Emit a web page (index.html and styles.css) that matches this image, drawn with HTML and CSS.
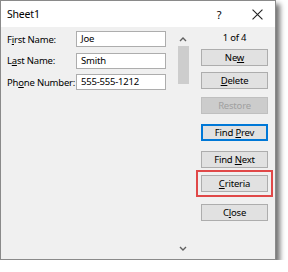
FILE: index.html
```html
<!DOCTYPE html>
<html lang="en">
<head>
  <meta charset="UTF-8" />
  <title>Sheet1</title>
  <link rel="stylesheet" href="styles.css">
</head>
<body>
  <div class="dialog">
    <div class="titlebar">
      <div class="title">Sheet1</div>
      <div class="title-btn help">?</div>
      <div class="title-btn close">
        <svg viewBox="0 0 10 10" width="11" height="11"><path d="M0.5 0.5 L9.5 9.5 M9.5 0.5 L0.5 9.5" stroke="#222" stroke-width="1" fill="none" /></svg>
      </div>
    </div>
    <div class="body">
      <div class="fields">
        <div class="field">
          <label>F<u>i</u>rst Name:</label>
          <div class="input">Joe</div>
        </div>
        <div class="field">
          <label>L<u>a</u>st Name:</label>
          <div class="input">Smith</div>
        </div>
        <div class="field">
          <label>Ph<u>o</u>ne Number:</label>
          <div class="input">555-555-1212</div>
        </div>
      </div>
      <div class="scrollbar">
        <svg class="arrow" viewBox="0 0 8 5" width="8" height="5"><path d="M1 4 L4 1 L7 4" stroke="#606060" stroke-width="1.4" fill="none" /></svg>
        <div class="thumb"></div>
        <div class="track"></div>
        <svg class="arrow" viewBox="0 0 8 5" width="8" height="5"><path d="M1 1 L4 4 L7 1" stroke="#606060" stroke-width="1.4" fill="none" /></svg>
      </div>
      <div class="buttons">
        <div class="counter">1 of 4</div>
        <div class="btn">Ne<u>w</u></div>
        <div class="btn delete"><u>D</u>elete</div>
        <div class="btn restore disabled">Restore</div>
        <div class="btn prev default">Find <u>P</u>rev</div>
        <div class="btn next">Find <u>N</u>ext</div>
        <div class="btn criteria marked"><u>C</u>riteria</div>
        <div class="btn last">C<u>l</u>ose</div>
      </div>
    </div>
  </div>
</body>
</html>
```

FILE: styles.css
```css
body {
  margin: 0;
  background: #fff;
  font-family: "Noto Sans", sans-serif;
  font-size: 9.5px;
  letter-spacing: -0.2px;
  color: #000;
}
.dialog {
  width: 274px;
  height: 258px;
  border: 1px solid #8a8a8a;
  background: #f0f0f0;
  display: flex;
  flex-direction: column;
  box-shadow: 4px 4px 5px rgba(0, 0, 0, 0.55);
}
.titlebar {
  height: 26px;
  background: #fff;
  display: flex;
  align-items: center;
  padding: 0 4px 0 6px;
}
.title {
  flex: 1;
  font-size: 10.5px;
}
.title-btn {
  width: 28px;
  text-align: center;
  font-size: 11px;
}
.help {
  margin-right: 10px;
}
.close {
  display: flex;
  justify-content: center;
}
.body {
  flex: 1;
  display: flex;
}
.fields {
  width: 164px;
  padding: 4px 0 0 6px;
  display: flex;
  flex-direction: column;
  gap: 5.5px;
}
.field {
  display: flex;
  align-items: center;
}
.field label {
  width: 69px;
  white-space: nowrap;
}
.input {
  width: 84px;
  height: 14px;
  border: 1px solid #adadad;
  background: #fff;
  padding-left: 4px;
  line-height: 14px;
}
.scrollbar {
  width: 12px;
  margin: 9px 0 0 6px;
  display: flex;
  flex-direction: column;
  align-items: center;
}
.arrow {
  flex: none;
  margin: 1px 0 4px;
}
.thumb {
  width: 11px;
  height: 38px;
  background: #cdcdcd;
}
.track {
  flex: 1;
}
.scrollbar .arrow:last-child {
  margin: 0 0 8px;
}
.buttons {
  width: 67px;
  margin-left: 12px;
  display: flex;
  flex-direction: column;
}
.counter {
  text-align: center;
  margin-top: 4px;
  height: 14px;
  line-height: 14px;
}
.btn {
  height: 15px;
  line-height: 15px;
  border: 1px solid #adadad;
  background: #e1e1e1;
  text-align: center;
  margin-top: 4px;
}
.btn.delete {
  margin-top: 6px;
}
.btn.restore {
  margin-top: 8px;
}
.btn.prev {
  margin-top: 10px;
}
.btn.next {
  margin-top: 10px;
}
.btn.criteria {
  margin-top: 7px;
}
.btn.last {
  margin-top: 12px;
}
.btn.disabled {
  color: #a0a0a0;
  background: #cccccc;
  border-color: #bfbfbf;
}
.btn.default {
  border-color: #0078d7;
  box-shadow: inset 0 0 0 1px #0078d7;
}
.btn.marked {
  box-shadow: 0 0 0 3px #f0f0f0, 0 0 0 5px #e04848;
}
```
